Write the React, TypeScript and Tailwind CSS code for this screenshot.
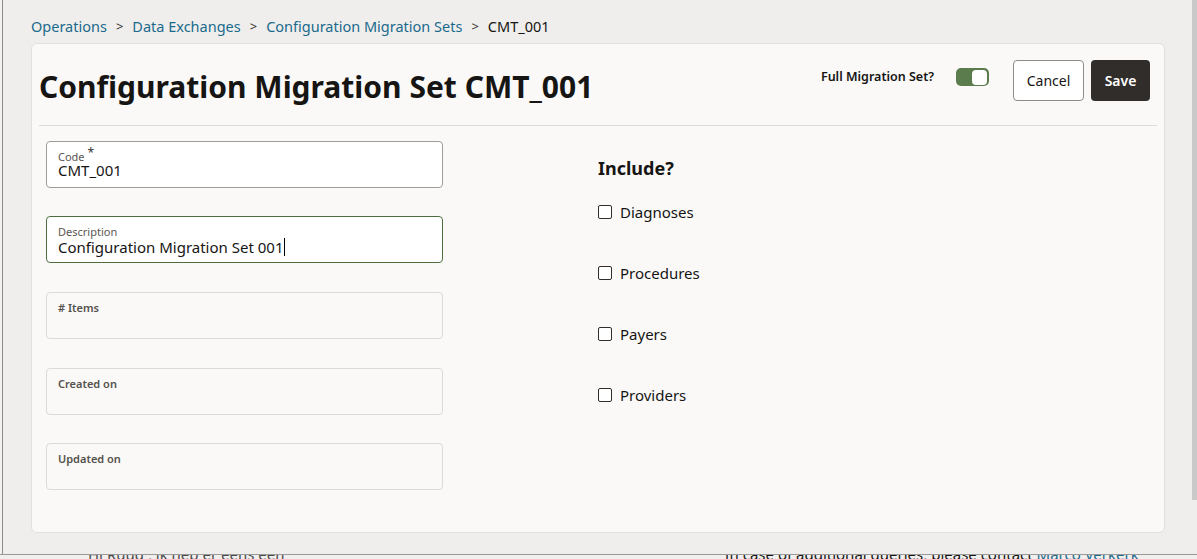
import React from 'react';

const font = { fontFamily: '"Noto Sans", "Liberation Sans", sans-serif' };

type FieldProps = {
  label: string;
  value?: string;
  required?: boolean;
  focused?: boolean;
  readOnly?: boolean;
  className?: string;
};

const Field: React.FC<FieldProps> = ({ label, value, required, focused, readOnly, className = '' }) => {
  const box = readOnly
    ? 'bg-[#faf9f8] border-[#dcdad7]'
    : focused
      ? 'bg-white border-[#4f6e40]'
      : 'bg-white border-[#9e9b98]';
  return (
    <div className={`h-[47px] w-[397px] rounded-[4px] border px-[11px] pt-[8px] ${box} ${className}`}>
      <div className={`flex items-start text-[11px] leading-[13px] ${readOnly ? 'font-semibold text-[#55514d]' : 'text-[#5b5652]'}`}>
        {label}
        {required && <span className="ml-[3px] -mt-[4px] text-[12px] leading-[13px] text-[#3a3633]">*</span>}
      </div>
      {value !== undefined && (
        <div className="flex items-center text-[15px] leading-[15px] text-[#161513]">
          {value}
          {focused && <span className="ml-px inline-block h-[18px] w-px bg-black" />}
        </div>
      )}
    </div>
  );
};

const Check: React.FC<{ label: string }> = ({ label }) => (
  <label className="flex items-center gap-[8px] text-[15px] leading-[20px] text-[#161513]">
    <span className="inline-block h-[14px] w-[14px] rounded-[2px] border-[1.5px] border-[#312d2a] bg-white" />
    {label}
  </label>
);

export default function App() {
  return (
    <div className="h-[559px] w-[1197px] overflow-hidden bg-[#d9d8d6]" style={font}>
      <div className="flex h-[554px]">
        <div className="w-[3px] border-r border-[#8c8c8c] bg-[#f2f1ef]" />
        <main className="flex-1 bg-[#efeeec] pl-[28px] pr-[27px]">
          <nav className="flex items-center gap-[9px] pt-[16px] text-[14.5px] leading-[20px]">
            <a className="text-[#1b6a8c]">Operations</a>
            <span className="text-[#312d2a] text-[13px]">&gt;</span>
            <a className="text-[#1b6a8c]">Data Exchanges</a>
            <span className="text-[#312d2a] text-[13px]">&gt;</span>
            <a className="text-[#1b6a8c]">Configuration Migration Sets</a>
            <span className="text-[#312d2a] text-[13px]">&gt;</span>
            <span className="text-[#161513]">CMT_001</span>
          </nav>

          <section className="mt-[7px] h-[490px] rounded-[6px] border border-[#e2e0dd] bg-[#faf9f8] px-[7px]">
            <header className="flex h-[82px] items-start border-b border-[#dedcd9]">
              <h1 className="mt-[23px] text-[30px] font-bold leading-[40px] text-[#161513]">
                Configuration Migration Set CMT_001
              </h1>
              <div className="ml-auto mt-[16px] flex items-start">
                <span className="mt-[8px] text-[12.5px] font-semibold text-[#161513]">Full Migration Set?</span>
                <span className="ml-[22px] mt-[8px] flex h-[18px] w-[33px] items-center justify-end rounded-[5px] bg-[#5b7d4e] pr-[2px]">
                  <span className="h-[15px] w-[15px] rounded-[4px] bg-white" />
                </span>
                <button className="ml-[24px] h-[41px] w-[71px] rounded-[4px] border border-[#8f8c89] bg-white text-[14px] text-[#161513]">
                  Cancel
                </button>
                <button className="ml-[7px] mr-[7px] h-[41px] w-[59px] rounded-[4px] bg-[#312d2a] text-[14px] font-semibold text-white">
                  Save
                </button>
              </div>
            </header>

            <div className="flex pt-[15px]">
              <div className="ml-[7px] flex flex-col">
                <Field label="Code" value="CMT_001" required />
                <Field label="Description" value="Configuration Migration Set 001" focused className="mt-[28px]" />
                <Field label="# Items" readOnly className="mt-[29px]" />
                <Field label="Created on" readOnly className="mt-[29px]" />
                <Field label="Updated on" readOnly className="mt-[28px]" />
              </div>
              <div className="ml-[155px] pt-[15px]">
                <h2 className="text-[18px] font-bold leading-[24px] text-[#161513]">Include?</h2>
                <div className="mt-[22px] flex flex-col gap-[41px]">
                  <Check label="Diagnoses" />
                  <Check label="Procedures" />
                  <Check label="Payers" />
                  <Check label="Providers" />
                </div>
              </div>
            </div>
          </section>
        </main>
        <div className="flex w-[5px] flex-col bg-[#efeeec]">
          <div className="h-[500px] bg-[#c9c9c9]" />
        </div>
      </div>
      <div className="flex h-[5px] overflow-hidden border-t border-[#9a9a9a] bg-[#f0efed] text-[15px] leading-[18px]">
        <div className="ml-[88px] -mt-[10px] text-[#4a4a4a]">Hi Ruud , ik heb er eens een</div>
        <div className="ml-[440px] -mt-[10px] text-[#161513]">
          In case of additional queries, please contact <span className="text-[#1b6a8c]">Marco Verkerk</span>
        </div>
      </div>
    </div>
  );
}
